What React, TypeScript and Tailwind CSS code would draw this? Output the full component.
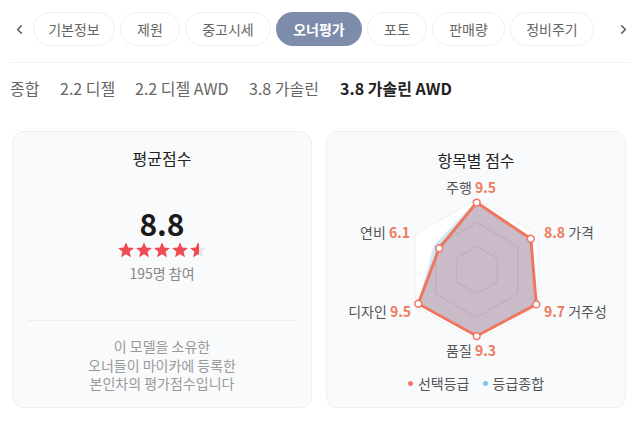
import React from "react";
import { ChevronLeft, ChevronRight } from "lucide-react";

const tabs = [
  { label: "기본정보", w: "w-[82px]" },
  { label: "제원", w: "w-[60px]" },
  { label: "중고시세", w: "w-[86px]" },
  { label: "오너평가", w: "w-[86px]" },
  { label: "포토", w: "w-[60px]" },
  { label: "판매량", w: "w-[73px]" },
  { label: "정비주기", w: "w-[84px]" },
];
const trims = [
  { label: "종합", w: "w-[50px]" },
  { label: "2.2 디젤", w: "w-[75px]" },
  { label: "2.2 디젤 AWD", w: "w-[114px]" },
  { label: "3.8 가솔린", w: "w-[91px]" },
  { label: "3.8 가솔린 AWD", w: "" },
];

// radar geometry (svg coords)
const CX = 149.7;
const CY = 98;
const R = 71;
const angles = [-90, -30, 30, 90, 150, 210];

const mine = [9.5, 8.8, 9.7, 9.3, 9.5, 6.1];
const overall = [9.6, 8.9, 9.6, 9.3, 9.4, 6.9];

function pt(i: number, v: number) {
  const a = (angles[i] * Math.PI) / 180;
  return [CX + Math.cos(a) * R * (v / 10), CY + Math.sin(a) * R * (v / 10)];
}

function poly(vals: number[]) {
  return vals.map((v, i) => pt(i, v).map((n) => n.toFixed(1)).join(",")).join(" ");
}

const ring = (v: number) => poly([v, v, v, v, v, v]);

const STAR = "M12 1.8l3 7 7.6.6-5.8 5 1.8 7.4L12 17.8l-6.6 4 1.8-7.4-5.8-5L9 8.8z";

function Stars() {
  return (
    <div className="flex">
      {[0, 1, 2, 3, 4].map((i) => (
        <svg key={i} width="18" height="18" viewBox="0 0 24 24">
          <defs>
            <linearGradient id={"half" + i}>
              <stop offset={i < 4 ? "100%" : "55%"} stopColor="#ef4b55" />
              <stop offset={i < 4 ? "100%" : "55%"} stopColor="#e4e6ea" />
            </linearGradient>
          </defs>
          <path d={STAR} fill={`url(#half${i})`} />
        </svg>
      ))}
    </div>
  );
}

function Radar() {
  const labelCls = "fill-[#555]";
  return (
    <svg width="298" height="192" viewBox="0 0 298 192" className="block">
      <polygon points={ring(10)} fill="#ffffff" stroke="#eceef1" strokeWidth="1" />
      <polygon points={poly(overall)} fill="#cde7f7" stroke="#d8edf9" strokeWidth="1.5" />
      <polygon points={poly(mine)} fill="rgba(196,112,118,0.36)" stroke="none" />
      <polygon points={ring(6.67)} fill="none" stroke="rgba(150,100,110,0.2)" strokeWidth="1" />
      <polygon points={ring(3.33)} fill="none" stroke="rgba(150,100,110,0.2)" strokeWidth="1" />
      <polygon points={poly(mine)} fill="none" stroke="#ef7760" strokeWidth="3" strokeLinejoin="round" />
      {mine.map((v, i) => {
        const [x, y] = pt(i, v);
        return <circle key={i} cx={x} cy={y} r="3.4" fill="#fff" stroke="#ef7760" strokeWidth="1.5" />;
      })}
      <g fontSize="14" dominantBaseline="central">
        <text x="144" y="15" textAnchor="middle">
          <tspan className={labelCls}>주행 </tspan>
          <tspan fill="#f07a5e" fontWeight="700">9.5</tspan>
        </text>
        <text x="83" y="60" textAnchor="end">
          <tspan className={labelCls}>연비 </tspan>
          <tspan fill="#f07a5e" fontWeight="700">6.1</tspan>
        </text>
        <text x="217" y="60" textAnchor="start">
          <tspan fill="#f07a5e" fontWeight="700">8.8</tspan>
          <tspan className={labelCls}> 가격</tspan>
        </text>
        <text x="84" y="138.5" textAnchor="end">
          <tspan className={labelCls}>디자인 </tspan>
          <tspan fill="#f07a5e" fontWeight="700">9.5</tspan>
        </text>
        <text x="217" y="138.5" textAnchor="start">
          <tspan fill="#f07a5e" fontWeight="700">9.7</tspan>
          <tspan className={labelCls}> 거주성</tspan>
        </text>
        <text x="144" y="178" textAnchor="middle">
          <tspan className={labelCls}>품질 </tspan>
          <tspan fill="#f07a5e" fontWeight="700">9.3</tspan>
        </text>
      </g>
    </svg>
  );
}

export default function App() {
  return (
    <div
      className="w-[640px] h-[426px] bg-white overflow-hidden"
      style={{ fontFamily: '"Noto Sans CJK KR", "Noto Sans", sans-serif' }}
    >
      {/* tab pills */}
      <div className="flex items-center pt-3">
        <div className="w-[33px] flex justify-center pl-[6px]">
          <ChevronLeft size={15} strokeWidth={2.5} className="text-[#555b66]" />
        </div>
        <div className="flex gap-[5px]">
          {tabs.map((t) => (
            <div
              key={t.label}
              className={
                t.label === "오너평가"
                  ? `${t.w} h-[34px] flex items-center justify-center rounded-full bg-[#7d8cab] text-white text-[14px] font-bold`
                  : `${t.w} h-[34px] flex items-center justify-center rounded-full border border-[#eef0f3] bg-white text-[#666] text-[14px]`
              }
            >
              {t.label}
            </div>
          ))}
        </div>
        <div className="flex-1 flex justify-end pr-[9px]">
          <ChevronRight size={15} strokeWidth={2.5} className="text-[#555b66]" />
        </div>
      </div>
      <div className="mx-[10px] mt-4 border-t border-[#f1f2f4]" />

      {/* trim filter */}
      <div className="flex px-[10px] mt-[14px] text-[16px] leading-[22px]">
        {trims.map((t) => (
          <span
            key={t.label}
            className={t.label === "3.8 가솔린 AWD" ? "text-[#222] font-bold" : `${t.w} text-[#666]`}
          >
            {t.label}
          </span>
        ))}
      </div>

      {/* score cards */}
      <div className="flex gap-[14px] px-[12px] mt-[32px]">
        <div className="w-[300px] h-[277px] rounded-[12px] border border-[#eceef1] bg-[#f9fafb] flex flex-col items-center pt-[14px]">
          <div className="text-[16px] leading-[24px] text-[#222]">평균점수</div>
          <div className="mt-[35px] text-[30px] leading-[36px] font-bold text-[#1a1a1a]">8.8</div>
          <Stars />
          <div className="mt-[4px] text-[14px] leading-[20px] text-[#888]">195명 참여</div>
          <div className="w-[268px] mt-[37px] border-t border-[#ebedf0]" />
          <div className="mt-[16px] text-[14px] leading-[18.5px] text-[#999] text-center">
            이 모델을 소유한
            <br />
            오너들이 마이카에 등록한
            <br />
            본인차의 평가점수입니다
          </div>
        </div>

        <div className="w-[300px] h-[277px] rounded-[12px] border border-[#eceef1] bg-[#f9fafb] flex flex-col items-center pt-[16px]">
          <div className="text-[16px] leading-[24px] text-[#222]">항목별 점수</div>
          <Radar />
          <div className="mt-[9px] flex items-center gap-[13px] text-[14px] leading-[20px] text-[#555]">
            <span className="flex items-center gap-[5px]">
              <span className="w-[5px] h-[5px] rounded-full bg-[#f07a6a]" />
              선택등급
            </span>
            <span className="flex items-center gap-[5px]">
              <span className="w-[5px] h-[5px] rounded-full bg-[#7fc4ee]" />
              등급종합
            </span>
          </div>
        </div>
      </div>
    </div>
  );
}
